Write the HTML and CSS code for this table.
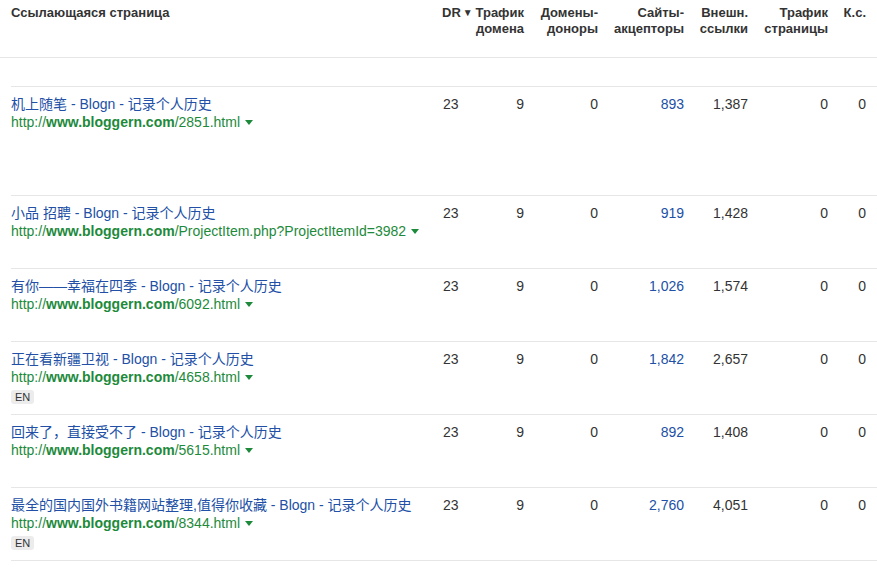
FILE: index.html
```html
<!DOCTYPE html>
<html lang="ru">
<head>
<meta charset="utf-8">
<title>Ссылающиеся страницы</title>
<link rel="stylesheet" href="styles.css">
</head>
<body>
<div class="table">
  <div class="head">
    <div class="cell first">Ссылающаяся страница</div>
    <div class="cell dr">DR<span class="sort">▼</span></div>
    <div class="cell num">Трафик<br>домена</div>
    <div class="cell num">Домены-<br>доноры</div>
    <div class="cell num">Сайты-<br>акцепторы</div>
    <div class="cell num">Внешн.<br>ссылки</div>
    <div class="cell num">Трафик<br>страницы</div>
    <div class="cell num">К.с.</div>
  </div>
  <div class="spacer"></div>

  <div class="row tall">
    <div class="cell first">
      <a class="title" href="#">机上随笔 - Blogn - 记录个人历史</a>
      <div class="url">http://<b>www.bloggern.com</b>/2851.html<span class="caret"></span></div>
    </div>
    <div class="cell dr">23</div>
    <div class="cell num">9</div>
    <div class="cell num">0</div>
    <div class="cell num blue">893</div>
    <div class="cell num">1,387</div>
    <div class="cell num">0</div>
    <div class="cell num">0</div>
  </div>

  <div class="row">
    <div class="cell first">
      <a class="title" href="#">小品 招聘 - Blogn - 记录个人历史</a>
      <div class="url">http://<b>www.bloggern.com</b>/ProjectItem.php?ProjectItemId=3982<span class="caret"></span></div>
    </div>
    <div class="cell dr">23</div>
    <div class="cell num">9</div>
    <div class="cell num">0</div>
    <div class="cell num blue">919</div>
    <div class="cell num">1,428</div>
    <div class="cell num">0</div>
    <div class="cell num">0</div>
  </div>

  <div class="row">
    <div class="cell first">
      <a class="title" href="#">有你——幸福在四季 - Blogn - 记录个人历史</a>
      <div class="url">http://<b>www.bloggern.com</b>/6092.html<span class="caret"></span></div>
    </div>
    <div class="cell dr">23</div>
    <div class="cell num">9</div>
    <div class="cell num">0</div>
    <div class="cell num blue">1,026</div>
    <div class="cell num">1,574</div>
    <div class="cell num">0</div>
    <div class="cell num">0</div>
  </div>

  <div class="row">
    <div class="cell first">
      <a class="title" href="#">正在看新疆卫视 - Blogn - 记录个人历史</a>
      <div class="url">http://<b>www.bloggern.com</b>/4658.html<span class="caret"></span></div>
      <span class="lang">EN</span>
    </div>
    <div class="cell dr">23</div>
    <div class="cell num">9</div>
    <div class="cell num">0</div>
    <div class="cell num blue">1,842</div>
    <div class="cell num">2,657</div>
    <div class="cell num">0</div>
    <div class="cell num">0</div>
  </div>

  <div class="row">
    <div class="cell first">
      <a class="title" href="#">回来了，直接受不了 - Blogn - 记录个人历史</a>
      <div class="url">http://<b>www.bloggern.com</b>/5615.html<span class="caret"></span></div>
    </div>
    <div class="cell dr">23</div>
    <div class="cell num">9</div>
    <div class="cell num">0</div>
    <div class="cell num blue">892</div>
    <div class="cell num">1,408</div>
    <div class="cell num">0</div>
    <div class="cell num">0</div>
  </div>

  <div class="row last">
    <div class="cell first">
      <a class="title" href="#">最全的国内国外书籍网站整理,值得你收藏 - Blogn - 记录个人历史</a>
      <div class="url">http://<b>www.bloggern.com</b>/8344.html<span class="caret"></span></div>
      <span class="lang">EN</span>
    </div>
    <div class="cell dr">23</div>
    <div class="cell num">9</div>
    <div class="cell num">0</div>
    <div class="cell num blue">2,760</div>
    <div class="cell num">4,051</div>
    <div class="cell num">0</div>
    <div class="cell num">0</div>
  </div>
</div>
</body>
</html>
```

FILE: styles.css
```css
html, body {
  margin: 0;
  padding: 0;
  background: #fff;
}
body {
  font-family: "Liberation Sans", Arial, "Noto Sans CJK SC", sans-serif;
  font-size: 13px;
  color: #333;
  width: 877px;
  overflow: hidden;
}
.table {
  width: 877px;
}
.head,
.row {
  display: grid;
  grid-template-columns: 431px 32px 50px 74px 86px 64px 80px 38px;
}
.head {
  padding-left: 11px;
  height: 57px;
  border-bottom: 1px solid #e6e6e6;
  font-weight: bold;
  line-height: 16px;
}
.head .cell {
  padding-top: 5px;
  white-space: nowrap;
}
.sort {
  font-size: 10px;
  margin-left: 2px;
  position: relative;
  top: -1px;
}
.spacer {
  height: 28px;
}
.row {
  margin-left: 11px;
  border-top: 1px solid #e6e6e6;
  height: 72px;
  font-size: 14px;
  line-height: 18px;
}
.row.tall {
  height: 108px;
}
.row.last {
  border-bottom: 1px solid #e6e6e6;
}
.row .cell {
  padding-top: 8px;
  white-space: nowrap;
}
.row .dr {
  padding-left: 1px;
}
.num {
  text-align: right;
}
.dr {
  text-align: left;
}
.blue {
  color: #2150a6;
}
.title {
  color: #2150a6;
  text-decoration: none;
  display: block;
}
.url {
  color: #1d8a3b;
}
.url b {
  font-weight: bold;
}
.caret {
  display: inline-block;
  width: 0;
  height: 0;
  margin-left: 5px;
  border-left: 4px solid transparent;
  border-right: 4px solid transparent;
  border-top: 5px solid #1d8a3b;
  vertical-align: 2px;
}
.lang {
  display: inline-block;
  margin-top: 4px;
  background: #ececec;
  border-radius: 3px;
  font-size: 11px;
  line-height: 14px;
  padding: 0 4px;
  color: #333;
}
```
